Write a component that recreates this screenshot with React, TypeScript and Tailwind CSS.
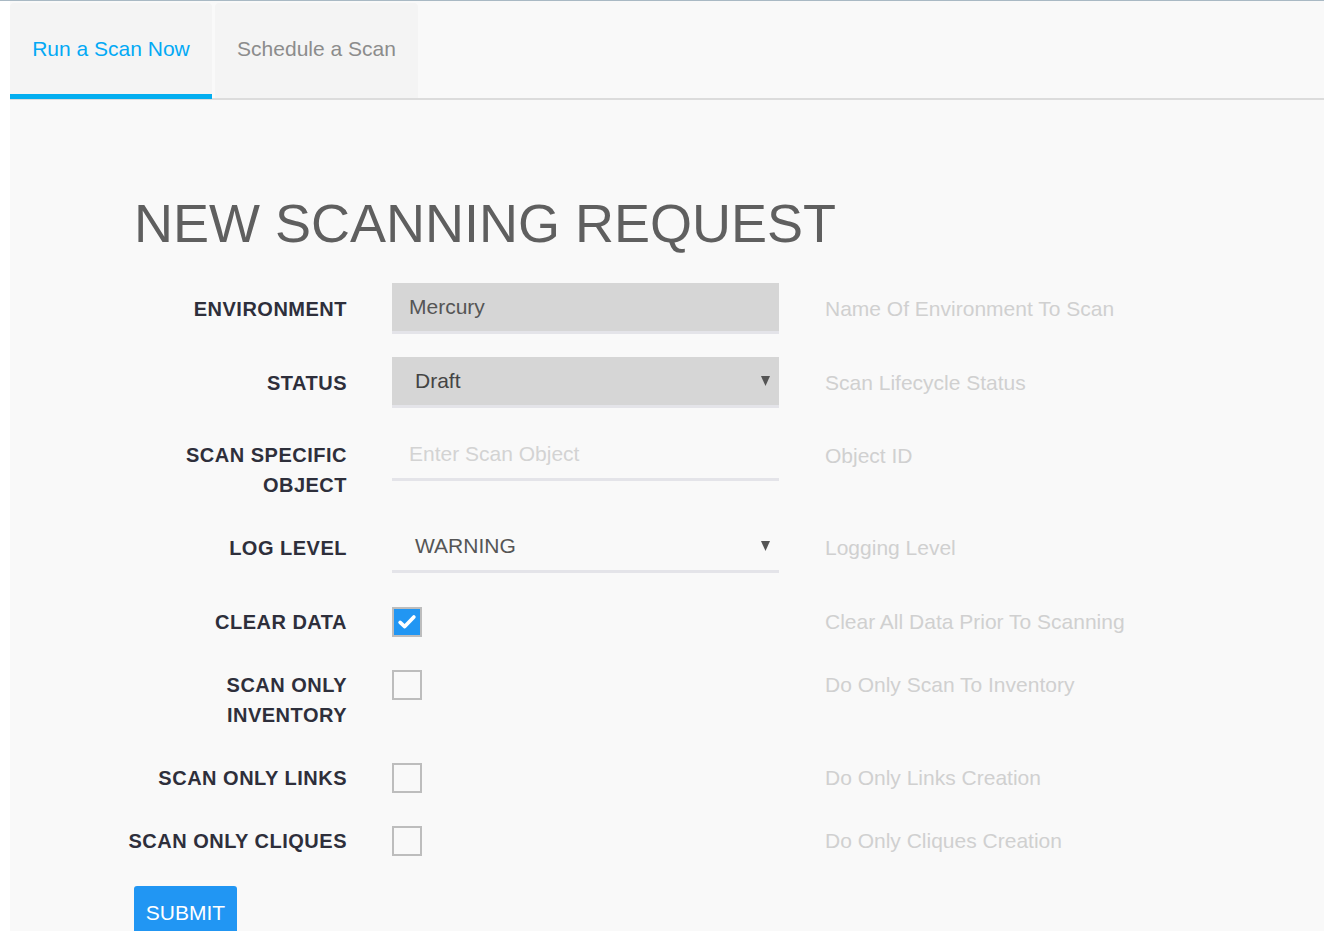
import React from 'react';

const font = { fontFamily: '"Liberation Sans", Arial, sans-serif' };

// Small down arrow used in the select boxes
const Caret = () => (
  <svg width="9" height="10" viewBox="0 0 9 10" className="shrink-0">
    <polygon points="0,0 9,0 4.5,10" fill="#555555" />
  </svg>
);

const Checkbox = ({ checked }: { checked?: boolean }) => (
  <div className="w-[30px] h-[30px] border-2 border-[#bdbdbd] flex items-center justify-center shrink-0">
    {checked && (
      <div className="w-full h-full bg-[#2196f3] flex items-center justify-center">
        <svg width="22" height="22" viewBox="0 0 24 24">
          <path d="M4.5 12.5l5 4.5L19.5 6.5" fill="none" stroke="#ffffff" strokeWidth="4" strokeLinecap="round" strokeLinejoin="round" />
        </svg>
      </div>
    )}
  </div>
);

const Label = ({ children, className = '' }: { children: React.ReactNode; className?: string }) => (
  <div className={`w-[247px] shrink-0 text-right whitespace-nowrap text-[20px] leading-[30px] font-bold tracking-[0.5px] text-[#2e2f3b] uppercase ${className}`}>
    {children}
  </div>
);

const Help = ({ children, className = '' }: { children: React.ReactNode; className?: string }) => (
  <div className={`ml-[46px] text-[21px] leading-[30px] text-[#d0d0d0] ${className}`}>{children}</div>
);

const App = () => {
  return (
    <div className="min-h-screen bg-white border-t border-[#a9b9c4]" style={font}>
      <div className="ml-[10px] bg-[#f9f9f9] min-h-[930px]">
        {/* Tabs */}
        <div className="pt-[2px] flex gap-[3px] border-b-2 border-[#dcdcdc]">
          <div className="w-[202px] h-[96px] -mb-[1px] bg-[#f4f4f4] rounded-t-[4px] border-b-[5px] border-[#03aef0] flex items-center justify-center text-[21px] text-[#03a9f4]">
            Run a Scan Now
          </div>
          <div className="w-[203px] h-[95px] pb-[4px] bg-[#f4f4f4] rounded-t-[4px] flex items-center justify-center text-[21px] text-[#8c8c8c]">
            Schedule a Scan
          </div>
        </div>

        <div className="pl-[90px]">
          <h1 className="mt-[96px] ml-[34px] text-[54px] leading-[54px] text-[#5f5f5f]">NEW SCANNING REQUEST</h1>

          {/* Environment */}
          <div className="mt-[33px] flex items-center">
            <Label>Environment</Label>
            <div className="ml-[45px] w-[387px] h-[51px] bg-[#d6d6d6] border-b-[3px] border-[#e4e4e9] pl-[17px] flex items-center text-[21px] text-[#555555]">
              Mercury
            </div>
            <Help>Name Of Environment To Scan</Help>
          </div>

          {/* Status */}
          <div className="mt-[23px] flex items-center">
            <Label>Status</Label>
            <div className="ml-[45px] w-[387px] h-[51px] bg-[#d6d6d6] border-b-[3px] border-[#e4e4e9] pl-[23px] pr-[9px] flex items-center justify-between text-[21px] text-[#444444]">
              <span>Draft</span>
              <Caret />
            </div>
            <Help>Scan Lifecycle Status</Help>
          </div>

          {/* Scan specific object */}
          <div className="mt-[22px] flex items-start">
            <Label className="pt-[10px]">
              Scan Specific
              <br />
              Object
            </Label>
            <div className="ml-[45px] w-[387px] h-[51px] border-b-[3px] border-[#e4e4e9] pl-[17px] flex items-center text-[21px] text-[#d3d3d3]">
              Enter Scan Object
            </div>
            <Help className="pt-[11px]">Object ID</Help>
          </div>

          {/* Log level */}
          <div className="mt-[22px] flex items-center">
            <Label>Log Level</Label>
            <div className="ml-[45px] w-[387px] h-[51px] border-b-[3px] border-[#e4e4e9] pl-[23px] pr-[9px] flex items-center justify-between text-[21px] text-[#555555]">
              <span>WARNING</span>
              <Caret />
            </div>
            <Help>Logging Level</Help>
          </div>

          {/* Clear data */}
          <div className="mt-[34px] flex items-center">
            <Label>Clear Data</Label>
            <div className="ml-[45px] w-[387px]">
              <Checkbox checked />
            </div>
            <Help>Clear All Data Prior To Scanning</Help>
          </div>

          {/* Scan only inventory */}
          <div className="mt-[33px] flex items-start">
            <Label>
              Scan Only
              <br />
              Inventory
            </Label>
            <div className="ml-[45px] w-[387px]">
              <Checkbox />
            </div>
            <Help>Do Only Scan To Inventory</Help>
          </div>

          {/* Scan only links */}
          <div className="mt-[33px] flex items-center">
            <Label>Scan Only Links</Label>
            <div className="ml-[45px] w-[387px]">
              <Checkbox />
            </div>
            <Help>Do Only Links Creation</Help>
          </div>

          {/* Scan only cliques */}
          <div className="mt-[33px] flex items-center">
            <Label>Scan Only Cliques</Label>
            <div className="ml-[45px] w-[387px]">
              <Checkbox />
            </div>
            <Help>Do Only Cliques Creation</Help>
          </div>

          <button className="mt-[30px] ml-[34px] w-[103px] h-[54px] bg-[#2196f3] rounded-[3px] text-white text-[21px] flex items-center justify-center">
            SUBMIT
          </button>
        </div>
      </div>
    </div>
  );
};

export default App;
